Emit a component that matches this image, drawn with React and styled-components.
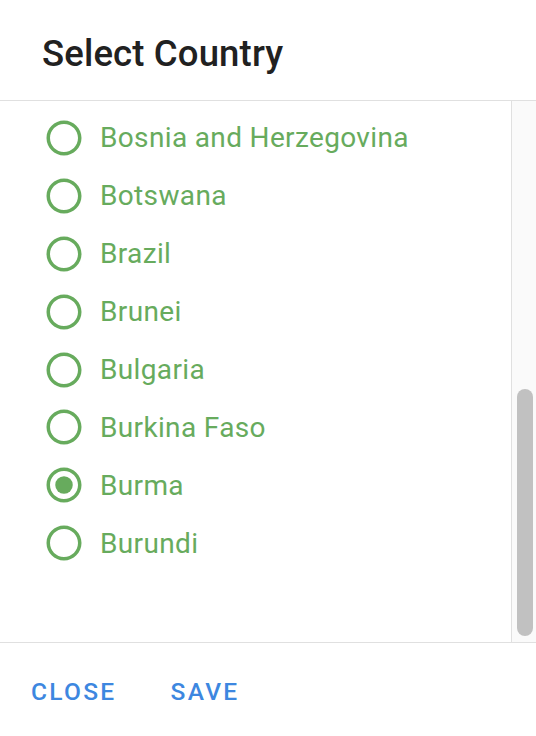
import React, { useState } from "react";
import styled, { createGlobalStyle } from "styled-components";

const Global = createGlobalStyle`
  html, body { margin: 0; padding: 0; background: #ffffff; }
  body { font-family: Roboto, "Noto Sans", Arial, sans-serif; }
  #root { width: 536px; height: 736px; }
`;

const Dialog = styled.div`
  width: 536px;
  height: 736px;
  display: flex;
  flex-direction: column;
  background: #ffffff;
`;

const Header = styled.header`
  height: 100px;
  flex: none;
  display: flex;
  align-items: center;
  padding: 0 42px;
  border-bottom: 1px solid #e0e0e0;
`;

const Title = styled.h2`
  margin: 6px 0 0;
  font-family: Roboto, sans-serif;
  font-weight: 500;
  font-size: 36.5px;
  color: #212121;
  letter-spacing: 0.15px;
`;

const Body = styled.div`
  flex: 1;
  display: flex;
  min-height: 0;
`;

const List = styled.ul`
  flex: 1;
  list-style: none;
  margin: 0;
  padding: 8px 0 0 43px;
  overflow: hidden;
`;

const Track = styled.div`
  flex: none;
  display: flex;
  flex-direction: column;
  background: #fafafa;
  border-left: 1px solid #e0e0e0;
  padding: 288px 3px 6px 5px;
  box-sizing: border-box;
  width: 25px;
`;

const Thumb = styled.div`
  flex: 1;
  background: #c1c1c1;
  border-radius: 8px;
`;

const Row = styled.li`
  height: 57.9px;
  display: flex;
  align-items: center;
  gap: 15px;
  cursor: pointer;
`;

const Label = styled.span`
  font-family: Roboto, sans-serif;
  font-size: 28px;
  color: #67ab5d;
  letter-spacing: 0.35px;
`;

const Footer = styled.footer`
  flex: none;
  height: 93px;
  border-top: 1px solid #e0e0e0;
  display: flex;
  align-items: center;
  padding-left: 31px;
  gap: 54px;
`;

const TextButton = styled.button`
  border: 0;
  background: none;
  padding: 0;
  font-family: Roboto, sans-serif;
  font-weight: 500;
  font-size: 24.5px;
  letter-spacing: 2.3px;
  color: #3d87e0;
  text-transform: uppercase;
  cursor: pointer;
  margin-top: 3px;
`;

const RadioIcon = ({ checked }) => (
  <svg width="42" height="42" viewBox="0 0 24 24" fill="#67ab5d">
    <path d="M12 2C6.48 2 2 6.48 2 12s4.48 10 10 10 10-4.48 10-10S17.52 2 12 2zm0 18c-4.42 0-8-3.58-8-8s3.58-8 8-8 8 3.58 8 8-3.58 8-8 8z" />
    {checked && <circle cx="12" cy="12" r="5" />}
  </svg>
);

const countries = [
  "Bosnia and Herzegovina", "Botswana", "Brazil", "Brunei", "Bulgaria",
  "Burkina Faso", "Burma", "Burundi",
];

export default function App() {
  const [selected, setSelected] = useState("Burma");
  return (
    <>
      <Global />
      <Dialog>
        <Header>
          <Title>Select Country</Title>
        </Header>
        <Body>
          <List>
            {countries.map((c) => (
              <Row key={c} onClick={() => setSelected(c)}>
                <RadioIcon checked={selected === c} />
                <Label>{c}</Label>
              </Row>
            ))}
          </List>
          <Track>
            <Thumb />
          </Track>
        </Body>
        <Footer>
          <TextButton>Close</TextButton>
          <TextButton>Save</TextButton>
        </Footer>
      </Dialog>
    </>
  );
}
